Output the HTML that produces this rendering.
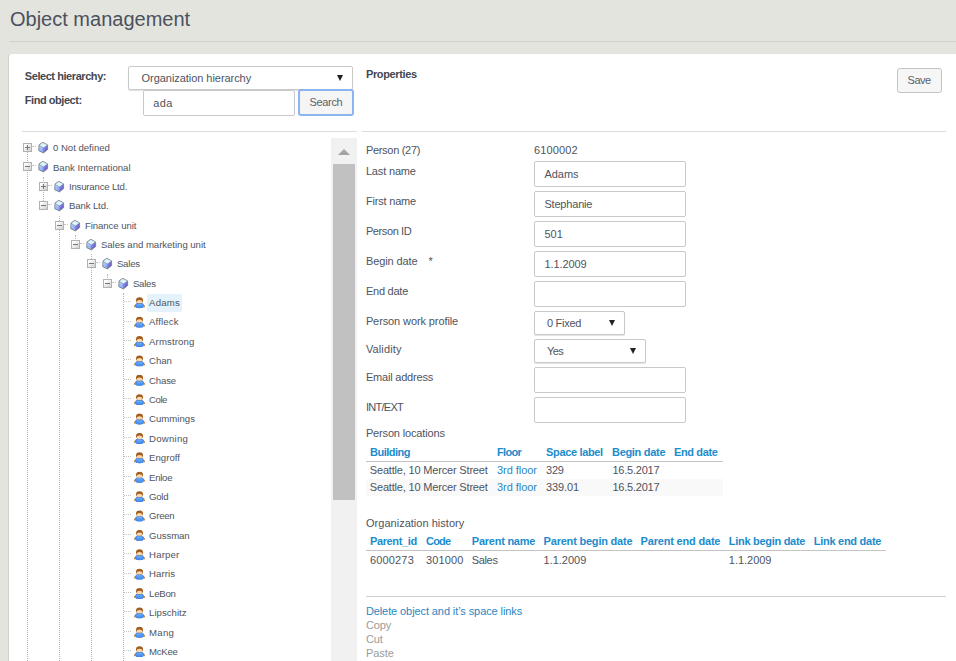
<!DOCTYPE html>
<html lang="en"><head><meta charset="utf-8"><title>Object management</title><style>
*{box-sizing:border-box;margin:0;padding:0}
html,body{width:956px;height:661px;overflow:hidden}
body{background:#e4e4df;font-family:"Liberation Sans",sans-serif;color:#4e5460;position:relative;font-size:11px}
.t{position:absolute;white-space:pre}
.b{font-weight:bold;color:#434852}
.title{position:absolute;left:10px;top:6.6px;font-size:20px;line-height:24px;color:#4b515d;font-weight:normal;white-space:pre}
.hr0{position:absolute;left:9px;top:41px;right:0;height:1px;background:#d2d2cc}
.panel{position:absolute;left:9px;top:54px;right:0;bottom:0;background:#fff;border-radius:3px 0 0 0;box-shadow:-1px 0 0 #d2d2cd}
.box{position:absolute;background:#fff;border:1px solid #c9c9c9;border-radius:2px}
.sel{box-shadow:0 1px 1px rgba(0,0,0,.12)}
.btn{position:absolute;background:#f6f6f6;border:1px solid #c4c4c4;border-radius:2px;text-align:center;color:#5a5f69}
.hl{position:absolute;height:1px;background:#dcdcdc}
.arrow{position:absolute;width:0;height:0;border-left:3.5px solid transparent;border-right:3.5px solid transparent;border-top:6px solid #222}
.lnk{color:#2b86bf}
.th{color:#1c8ccd;font-weight:bold}
.gr{color:#9b9b9b}
.vd{position:absolute;width:0;border-left:1px dotted #b6b6b6}
.hd{position:absolute;height:0;border-top:1px dotted #c4c4c4}
.ex{position:absolute;width:9px;height:9px;border:1px solid #b2b2b2;background:linear-gradient(135deg,#fff 15%,#cfcfcf 100%)}
.ex i{position:absolute;left:1px;top:3px;width:5px;height:1px;background:#777}
.ex.p b{position:absolute;left:3px;top:1px;width:1px;height:5px;background:#777}
.ic{position:absolute}
.selbg{position:absolute;background:#e3f2fb;border-radius:2px}
</style></head><body>
<svg width="0" height="0" style="position:absolute"><defs>
<linearGradient id="gl" x1="0" y1="0" x2="1" y2="1"><stop offset="0" stop-color="#b4d2ff"/><stop offset="1" stop-color="#86a6f4"/></linearGradient>
<linearGradient id="gr" x1="0" y1="0" x2="1" y2="1"><stop offset="0" stop-color="#9a98ec"/><stop offset="1" stop-color="#5a48c4"/></linearGradient>
<linearGradient id="gb" x1="0" y1="0" x2="0" y2="1"><stop offset="0" stop-color="#6ab6ff"/><stop offset="1" stop-color="#3a86ee"/></linearGradient>
<symbol id="cube" viewBox="0 0 11 12"><path d="M4.7 0.3 L9.6 2.9 L9.6 7.6 L5.4 10.9 L0.8 8.7 L1 3.1 Z" fill="#7f8798" stroke="#7a8090" stroke-width=".9" stroke-linejoin="round"/><path d="M4.7 0.8 L9.1 3 L5.4 5.8 L1.5 3.2 Z" fill="#dcf6fd"/><path d="M1.4 3.6 L5.2 6.2 L5.2 10.3 L1.3 8.4 Z" fill="url(#gl)"/><path d="M5.6 6.2 L9.2 3.5 L9.2 7.4 L5.6 10.3 Z" fill="url(#gr)"/></symbol>
<symbol id="person" viewBox="0 0 12 12"><path d="M2.7 6.4 Q6 5.2 9.3 6.4 L11.2 9 L10.6 10.3 L9.5 10 L9.5 10.9 Q6 11.7 2.5 10.9 L2.5 10 L1.4 10.3 L0.8 9 Z" fill="#4f78d8"/><path d="M3.1 6.8 Q6 5.9 8.9 6.8 L9.4 10.8 Q6 11.6 2.6 10.8 Z" fill="url(#gb)"/><ellipse cx="1.5" cy="9.5" rx=".9" ry="1.1" fill="#c88432"/><ellipse cx="10.5" cy="9.5" rx=".9" ry="1.1" fill="#c88432"/><ellipse cx="6" cy="3.5" rx="3.5" ry="3.1" fill="#a35c1c"/><ellipse cx="6" cy="4.8" rx="2.8" ry="1.8" fill="#f8d8b0"/><rect x="4.6" y="6.3" width="2.8" height=".7" rx=".3" fill="#6a8aa0"/></symbol>
</defs></svg>
<div class="title">Object management</div>
<div class="hr0"></div>
<div class="panel"></div>
<span class="t b" style="left:24.8px;top:68.99px;font-size:11.0px;line-height:14px;letter-spacing:-0.435px;">Select hierarchy:</span>
<span class="t b" style="left:24.8px;top:92.99px;font-size:11.0px;line-height:14px;letter-spacing:-0.457px;">Find object:</span>
<div class="box sel" style="left:128px;top:66px;width:225px;height:24px"></div>
<span class="t " style="left:141.6px;top:71.19px;font-size:11.0px;line-height:14px;letter-spacing:-0.051px;">Organization hierarchy</span>
<div class="arrow" style="left:337px;top:75px"></div>
<div class="box" style="left:143px;top:90px;width:152px;height:26px"></div>
<span class="t " style="left:153.2px;top:95.89px;font-size:11.0px;line-height:14px;letter-spacing:0.370px;">ada</span>
<div class="btn" style="left:298px;top:89px;width:56px;height:27px;border:2px solid #8db4f2;border-radius:3px;background:#f5f5f5"></div>
<span class="t " style="left:309.4px;top:95.19px;font-size:11.0px;line-height:14px;letter-spacing:-0.312px;color:#5a5f69">Search</span>
<span class="t b" style="left:365.9px;top:67.19px;font-size:11.0px;line-height:14px;letter-spacing:-0.347px;">Properties</span>
<div class="btn" style="left:897px;top:68px;width:45px;height:25px;border-radius:3px"></div>
<span class="t " style="left:907.6px;top:73.19px;font-size:11.0px;line-height:14px;letter-spacing:-0.493px;color:#5a5f69">Save</span>
<div class="hl" style="left:22px;top:131px;width:335px"></div>
<div class="hl" style="left:362px;top:131px;width:584px"></div>
<div style="position:absolute;left:331px;top:138px;width:26px;height:523px;background:#f1f1f1"></div>
<div style="position:absolute;left:333px;top:164px;width:22px;height:336px;background:#c1c1c1"></div>
<div style="position:absolute;left:338px;top:149px;width:0;height:0;border-left:6px solid transparent;border-right:6px solid transparent;border-bottom:6px solid #a3a3a3"></div>
<div class="vd" style="left:27px;top:152.0px;height:509.0px"></div>
<div class="vd" style="left:43px;top:176.9px;height:23.8px"></div>
<div class="vd" style="left:59px;top:215.7px;height:445.3px"></div>
<div class="vd" style="left:75px;top:235.0px;height:4.4px"></div>
<div class="vd" style="left:91px;top:254.4px;height:406.6px"></div>
<div class="vd" style="left:107px;top:273.8px;height:4.4px"></div>
<div class="vd" style="left:123px;top:293.2px;height:367.8px"></div>
<div class="hd" style="left:32px;top:146.0px;width:4px"></div>
<div class="ex p" style="left:23px;top:143.0px"><i></i><b></b></div>
<svg class="ic" style="left:38px;top:142.0px" width="11" height="12" viewBox="0 0 11 12"><use href="#cube"/></svg>
<span class="t " style="left:52.9px;top:142.17px;font-size:9.6px;line-height:12px;letter-spacing:-0.007px;">0 Not defined</span>
<div class="hd" style="left:32px;top:165.4px;width:4px"></div>
<div class="ex " style="left:23px;top:162.4px"><i></i><b></b></div>
<svg class="ic" style="left:38px;top:161.4px" width="11" height="12" viewBox="0 0 11 12"><use href="#cube"/></svg>
<span class="t " style="left:52.9px;top:161.56px;font-size:9.6px;line-height:12px;letter-spacing:0.021px;">Bank International</span>
<div class="hd" style="left:48px;top:184.8px;width:4px"></div>
<div class="ex p" style="left:39px;top:181.8px"><i></i><b></b></div>
<svg class="ic" style="left:54px;top:180.8px" width="11" height="12" viewBox="0 0 11 12"><use href="#cube"/></svg>
<span class="t " style="left:68.9px;top:180.94px;font-size:9.6px;line-height:12px;letter-spacing:-0.178px;">Insurance Ltd.</span>
<div class="hd" style="left:48px;top:204.2px;width:4px"></div>
<div class="ex " style="left:39px;top:201.2px"><i></i><b></b></div>
<svg class="ic" style="left:54px;top:200.2px" width="11" height="12" viewBox="0 0 11 12"><use href="#cube"/></svg>
<span class="t " style="left:68.9px;top:200.33px;font-size:9.6px;line-height:12px;letter-spacing:-0.106px;">Bank Ltd.</span>
<div class="hd" style="left:64px;top:223.5px;width:4px"></div>
<div class="ex " style="left:55px;top:220.5px"><i></i><b></b></div>
<svg class="ic" style="left:70px;top:219.5px" width="11" height="12" viewBox="0 0 11 12"><use href="#cube"/></svg>
<span class="t " style="left:84.9px;top:219.71px;font-size:9.6px;line-height:12px;letter-spacing:-0.070px;">Finance unit</span>
<div class="hd" style="left:80px;top:242.9px;width:4px"></div>
<div class="ex " style="left:71px;top:239.9px"><i></i><b></b></div>
<svg class="ic" style="left:86px;top:238.9px" width="11" height="12" viewBox="0 0 11 12"><use href="#cube"/></svg>
<span class="t " style="left:100.9px;top:239.10px;font-size:9.6px;line-height:12px;letter-spacing:-0.035px;">Sales and marketing unit</span>
<div class="hd" style="left:96px;top:262.3px;width:4px"></div>
<div class="ex " style="left:87px;top:259.3px"><i></i><b></b></div>
<svg class="ic" style="left:102px;top:258.3px" width="11" height="12" viewBox="0 0 11 12"><use href="#cube"/></svg>
<span class="t " style="left:116.9px;top:258.48px;font-size:9.6px;line-height:12px;letter-spacing:-0.200px;">Sales</span>
<div class="hd" style="left:112px;top:281.7px;width:4px"></div>
<div class="ex " style="left:103px;top:278.7px"><i></i><b></b></div>
<svg class="ic" style="left:118px;top:277.7px" width="11" height="12" viewBox="0 0 11 12"><use href="#cube"/></svg>
<span class="t " style="left:132.9px;top:277.87px;font-size:9.6px;line-height:12px;letter-spacing:-0.225px;">Sales</span>
<div class="hd" style="left:124px;top:301.1px;width:7px"></div>
<div class="selbg" style="left:147px;top:293.8px;width:35px;height:17.8px"></div>
<svg class="ic" style="left:133px;top:297px" width="12" height="12" viewBox="0 0 12 12"><use href="#person" x=".5" y="-0.12"/></svg>
<span class="t " style="left:149.1px;top:297.05px;font-size:9.6px;line-height:12px;letter-spacing:0.185px;">Adams</span>
<div class="hd" style="left:124px;top:320.5px;width:7px"></div>
<svg class="ic" style="left:133px;top:316px" width="12" height="12" viewBox="0 0 12 12"><use href="#person" x=".5" y="0.27"/></svg>
<span class="t " style="left:149.1px;top:316.44px;font-size:9.6px;line-height:12px;letter-spacing:0.129px;">Affleck</span>
<div class="hd" style="left:124px;top:339.9px;width:7px"></div>
<svg class="ic" style="left:133px;top:336px" width="12" height="12" viewBox="0 0 12 12"><use href="#person" x=".5" y="-0.35"/></svg>
<span class="t " style="left:149.1px;top:335.82px;font-size:9.6px;line-height:12px;letter-spacing:0.131px;">Armstrong</span>
<div class="hd" style="left:124px;top:359.2px;width:7px"></div>
<svg class="ic" style="left:133px;top:355px" width="12" height="12" viewBox="0 0 12 12"><use href="#person" x=".5" y="0.04"/></svg>
<span class="t " style="left:149.1px;top:355.21px;font-size:9.6px;line-height:12px;letter-spacing:-0.046px;">Chan</span>
<div class="hd" style="left:124px;top:378.6px;width:7px"></div>
<svg class="ic" style="left:133px;top:374px" width="12" height="12" viewBox="0 0 12 12"><use href="#person" x=".5" y="0.42"/></svg>
<span class="t " style="left:149.1px;top:374.59px;font-size:9.6px;line-height:12px;letter-spacing:-0.159px;">Chase</span>
<div class="hd" style="left:124px;top:398.0px;width:7px"></div>
<svg class="ic" style="left:133px;top:394px" width="12" height="12" viewBox="0 0 12 12"><use href="#person" x=".5" y="-0.19"/></svg>
<span class="t " style="left:149.1px;top:393.98px;font-size:9.6px;line-height:12px;letter-spacing:-0.478px;">Cole</span>
<div class="hd" style="left:124px;top:417.4px;width:7px"></div>
<svg class="ic" style="left:133px;top:413px" width="12" height="12" viewBox="0 0 12 12"><use href="#person" x=".5" y="0.19"/></svg>
<span class="t " style="left:149.1px;top:413.36px;font-size:9.6px;line-height:12px;letter-spacing:0.006px;">Cummings</span>
<div class="hd" style="left:124px;top:436.8px;width:7px"></div>
<svg class="ic" style="left:133px;top:433px" width="12" height="12" viewBox="0 0 12 12"><use href="#person" x=".5" y="-0.42"/></svg>
<span class="t " style="left:149.1px;top:432.75px;font-size:9.6px;line-height:12px;letter-spacing:0.226px;">Downing</span>
<div class="hd" style="left:124px;top:456.2px;width:7px"></div>
<svg class="ic" style="left:133px;top:452px" width="12" height="12" viewBox="0 0 12 12"><use href="#person" x=".5" y="-0.04"/></svg>
<span class="t " style="left:149.1px;top:452.13px;font-size:9.6px;line-height:12px;letter-spacing:0.006px;">Engroff</span>
<div class="hd" style="left:124px;top:475.5px;width:7px"></div>
<svg class="ic" style="left:133px;top:471px" width="12" height="12" viewBox="0 0 12 12"><use href="#person" x=".5" y="0.35"/></svg>
<span class="t " style="left:149.1px;top:471.52px;font-size:9.6px;line-height:12px;letter-spacing:-0.287px;">Enloe</span>
<div class="hd" style="left:124px;top:494.9px;width:7px"></div>
<svg class="ic" style="left:133px;top:491px" width="12" height="12" viewBox="0 0 12 12"><use href="#person" x=".5" y="-0.27"/></svg>
<span class="t " style="left:149.1px;top:490.90px;font-size:9.6px;line-height:12px;letter-spacing:-0.289px;">Gold</span>
<div class="hd" style="left:124px;top:514.3px;width:7px"></div>
<svg class="ic" style="left:133px;top:510px" width="12" height="12" viewBox="0 0 12 12"><use href="#person" x=".5" y="0.12"/></svg>
<span class="t " style="left:149.1px;top:510.29px;font-size:9.6px;line-height:12px;letter-spacing:-0.293px;">Green</span>
<div class="hd" style="left:124px;top:533.7px;width:7px"></div>
<svg class="ic" style="left:133px;top:530px" width="12" height="12" viewBox="0 0 12 12"><use href="#person" x=".5" y="-0.50"/></svg>
<span class="t " style="left:149.1px;top:529.67px;font-size:9.6px;line-height:12px;letter-spacing:-0.077px;">Gussman</span>
<div class="hd" style="left:124px;top:553.1px;width:7px"></div>
<svg class="ic" style="left:133px;top:549px" width="12" height="12" viewBox="0 0 12 12"><use href="#person" x=".5" y="-0.12"/></svg>
<span class="t " style="left:149.1px;top:549.06px;font-size:9.6px;line-height:12px;letter-spacing:0.134px;">Harper</span>
<div class="hd" style="left:124px;top:572.5px;width:7px"></div>
<svg class="ic" style="left:133px;top:568px" width="12" height="12" viewBox="0 0 12 12"><use href="#person" x=".5" y="0.27"/></svg>
<span class="t " style="left:149.1px;top:568.44px;font-size:9.6px;line-height:12px;letter-spacing:0.081px;">Harris</span>
<div class="hd" style="left:124px;top:591.9px;width:7px"></div>
<svg class="ic" style="left:133px;top:588px" width="12" height="12" viewBox="0 0 12 12"><use href="#person" x=".5" y="-0.35"/></svg>
<span class="t " style="left:149.1px;top:587.83px;font-size:9.6px;line-height:12px;letter-spacing:-0.238px;">LeBon</span>
<div class="hd" style="left:124px;top:611.2px;width:7px"></div>
<svg class="ic" style="left:133px;top:607px" width="12" height="12" viewBox="0 0 12 12"><use href="#person" x=".5" y="0.04"/></svg>
<span class="t " style="left:149.1px;top:607.21px;font-size:9.6px;line-height:12px;letter-spacing:0.009px;">Lipschitz</span>
<div class="hd" style="left:124px;top:630.6px;width:7px"></div>
<svg class="ic" style="left:133px;top:626px" width="12" height="12" viewBox="0 0 12 12"><use href="#person" x=".5" y="0.42"/></svg>
<span class="t " style="left:149.1px;top:626.60px;font-size:9.6px;line-height:12px;letter-spacing:0.233px;">Mang</span>
<div class="hd" style="left:124px;top:650.0px;width:7px"></div>
<svg class="ic" style="left:133px;top:646px" width="12" height="12" viewBox="0 0 12 12"><use href="#person" x=".5" y="-0.19"/></svg>
<span class="t " style="left:149.1px;top:645.98px;font-size:9.6px;line-height:12px;letter-spacing:-0.290px;">McKee</span>
<span class="t " style="left:365.9px;top:143.19px;font-size:11.0px;line-height:14px;letter-spacing:-0.298px;">Person (27)</span>
<span class="t " style="left:365.9px;top:164.19px;font-size:11.0px;line-height:14px;letter-spacing:-0.159px;">Last name</span>
<span class="t " style="left:365.9px;top:194.19px;font-size:11.0px;line-height:14px;letter-spacing:-0.185px;">First name</span>
<span class="t " style="left:365.9px;top:224.19px;font-size:11.0px;line-height:14px;letter-spacing:-0.390px;">Person ID</span>
<span class="t " style="left:365.9px;top:254.19px;font-size:11.0px;line-height:14px;letter-spacing:-0.090px;">Begin date</span>
<span class="t " style="left:365.9px;top:284.19px;font-size:11.0px;line-height:14px;letter-spacing:-0.235px;">End date</span>
<span class="t " style="left:365.9px;top:313.69px;font-size:11.0px;line-height:14px;letter-spacing:-0.103px;">Person work profile</span>
<span class="t " style="left:365.9px;top:341.89px;font-size:11.0px;line-height:14px;letter-spacing:0.121px;">Validity</span>
<span class="t " style="left:365.9px;top:369.69px;font-size:11.0px;line-height:14px;letter-spacing:-0.200px;">Email address</span>
<span class="t " style="left:365.9px;top:399.99px;font-size:11.0px;line-height:14px;letter-spacing:-0.712px;">INT/EXT</span>
<span class="t " style="left:365.9px;top:425.79px;font-size:11.0px;line-height:14px;letter-spacing:-0.155px;">Person locations</span>
<span class="t " style="left:428.6px;top:254.19px;font-size:11.0px;line-height:14px;letter-spacing:-0.200px;">*</span>
<span class="t " style="left:533.9px;top:143.19px;font-size:11.0px;line-height:14px;letter-spacing:0.162px;">6100002</span>
<div class="box" style="left:534px;top:161px;width:152px;height:26px"></div>
<span class="t " style="left:544.4px;top:167.09px;font-size:11.0px;line-height:14px;letter-spacing:-0.012px;">Adams</span>
<div class="box" style="left:534px;top:191px;width:152px;height:26px"></div>
<span class="t " style="left:544.4px;top:197.09px;font-size:11.0px;line-height:14px;letter-spacing:-0.181px;">Stephanie</span>
<div class="box" style="left:534px;top:221px;width:152px;height:26px"></div>
<span class="t " style="left:544.4px;top:227.09px;font-size:11.0px;line-height:14px;letter-spacing:0.070px;">501</span>
<div class="box" style="left:534px;top:251px;width:152px;height:26px"></div>
<span class="t " style="left:544.4px;top:257.09px;font-size:11.0px;line-height:14px;letter-spacing:-0.090px;">1.1.2009</span>
<div class="box" style="left:534px;top:281px;width:152px;height:26px"></div>
<div class="box" style="left:534px;top:367px;width:152px;height:26px"></div>
<div class="box" style="left:534px;top:397px;width:152px;height:26px"></div>
<div class="box sel" style="left:534px;top:311px;width:91px;height:24px"></div>
<span class="t " style="left:546.9px;top:315.59px;font-size:11.0px;line-height:14px;letter-spacing:-0.246px;">0 Fixed</span>
<div class="arrow" style="left:609px;top:320px"></div>
<div class="box sel" style="left:534px;top:339px;width:112px;height:24px"></div>
<span class="t " style="left:546.9px;top:343.79px;font-size:11.0px;line-height:14px;letter-spacing:-0.577px;">Yes</span>
<div class="arrow" style="left:630px;top:348.3px"></div>
<div class="hl" style="left:366px;top:461px;width:357px;height:1px;background:#c4c4c4"></div>
<div style="position:absolute;left:366px;top:479px;width:357px;height:17px;background:#f9f9f9"></div>
<span class="t th" style="left:370.1px;top:445.09px;font-size:11.0px;line-height:14px;letter-spacing:-0.529px;">Building</span>
<span class="t th" style="left:497.0px;top:445.09px;font-size:11.0px;line-height:14px;letter-spacing:-0.650px;">Floor</span>
<span class="t th" style="left:546.1px;top:445.09px;font-size:11.0px;line-height:14px;letter-spacing:-0.345px;">Space label</span>
<span class="t th" style="left:612.0px;top:445.09px;font-size:11.0px;line-height:14px;letter-spacing:-0.304px;">Begin date</span>
<span class="t th" style="left:674.1px;top:445.09px;font-size:11.0px;line-height:14px;letter-spacing:-0.393px;">End date</span>
<span class="t " style="left:369.8px;top:462.89px;font-size:11.0px;line-height:14px;letter-spacing:-0.178px;">Seattle, 10 Mercer Street</span>
<span class="t lnk" style="left:497.0px;top:462.89px;font-size:11.0px;line-height:14px;letter-spacing:-0.045px;">3rd floor</span>
<span class="t " style="left:546.1px;top:462.89px;font-size:11.0px;line-height:14px;letter-spacing:-0.230px;">329</span>
<span class="t " style="left:612.4px;top:462.89px;font-size:11.0px;line-height:14px;letter-spacing:-0.217px;">16.5.2017</span>
<span class="t " style="left:369.8px;top:479.79px;font-size:11.0px;line-height:14px;letter-spacing:-0.178px;">Seattle, 10 Mercer Street</span>
<span class="t lnk" style="left:497.0px;top:479.79px;font-size:11.0px;line-height:14px;letter-spacing:-0.045px;">3rd floor</span>
<span class="t " style="left:546.1px;top:479.79px;font-size:11.0px;line-height:14px;letter-spacing:-0.131px;">339.01</span>
<span class="t " style="left:612.4px;top:479.79px;font-size:11.0px;line-height:14px;letter-spacing:-0.217px;">16.5.2017</span>
<span class="t " style="left:366.0px;top:515.99px;font-size:11.0px;line-height:14px;letter-spacing:0.020px;">Organization history</span>
<span class="t th" style="left:369.9px;top:534.39px;font-size:11.0px;line-height:14px;letter-spacing:-0.343px;">Parent_id</span>
<span class="t th" style="left:426.1px;top:534.39px;font-size:11.0px;line-height:14px;letter-spacing:-0.867px;">Code</span>
<span class="t th" style="left:471.8px;top:534.39px;font-size:11.0px;line-height:14px;letter-spacing:-0.243px;">Parent name</span>
<span class="t th" style="left:543.6px;top:534.39px;font-size:11.0px;line-height:14px;letter-spacing:-0.206px;">Parent begin date</span>
<span class="t th" style="left:640.6px;top:534.39px;font-size:11.0px;line-height:14px;letter-spacing:-0.188px;">Parent end date</span>
<span class="t th" style="left:728.8px;top:534.39px;font-size:11.0px;line-height:14px;letter-spacing:-0.292px;">Link begin date</span>
<span class="t th" style="left:813.8px;top:534.39px;font-size:11.0px;line-height:14px;letter-spacing:-0.276px;">Link end date</span>
<div class="hl" style="left:366px;top:550px;width:520px;height:1px;background:#c4c4c4"></div>
<span class="t " style="left:369.9px;top:553.19px;font-size:11.0px;line-height:14px;letter-spacing:0.179px;">6000273</span>
<span class="t " style="left:426.1px;top:553.19px;font-size:11.0px;line-height:14px;letter-spacing:0.096px;">301000</span>
<span class="t " style="left:471.8px;top:553.19px;font-size:11.0px;line-height:14px;letter-spacing:-0.358px;">Sales</span>
<span class="t " style="left:543.6px;top:553.19px;font-size:11.0px;line-height:14px;letter-spacing:-0.018px;">1.1.2009</span>
<span class="t " style="left:728.8px;top:553.19px;font-size:11.0px;line-height:14px;letter-spacing:-0.018px;">1.1.2009</span>
<div class="hl" style="left:366px;top:596px;width:580px;background:#cfcfcf"></div>
<span class="t lnk" style="left:365.9px;top:603.79px;font-size:11.0px;line-height:14px;letter-spacing:-0.094px;">Delete object and it’s space links</span>
<span class="t gr" style="left:365.9px;top:617.89px;font-size:11.0px;line-height:14px;letter-spacing:-0.129px;">Copy</span>
<span class="t gr" style="left:365.9px;top:631.89px;font-size:11.0px;line-height:14px;letter-spacing:-0.063px;">Cut</span>
<span class="t gr" style="left:365.9px;top:645.89px;font-size:11.0px;line-height:14px;letter-spacing:-0.035px;">Paste</span>
</body></html>
